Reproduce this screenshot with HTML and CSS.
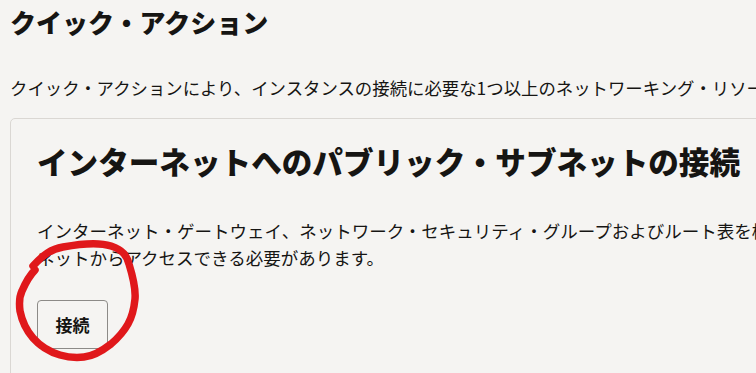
FILE: index.html
```html
<!DOCTYPE html>
<html lang="ja">
<head>
<meta charset="utf-8">
<link rel="stylesheet" href="styles.css">
</head>
<body>
<main class="page">
  <h1 class="title">クイック・アクション</h1>
  <p class="intro">クイック・アクションにより、インスタンスの接続に必要な1つ以上のネットワーキング・リソースを作成できます。</p>
  <section class="card">
    <h2 class="card-title">インターネットへのパブリック・サブネットの接続</h2>
    <p class="card-text">インターネット・ゲートウェイ、ネットワーク・セキュリティ・グループおよびルート表を構成します。インスタンスはインター<br>ネットからアクセスできる必要があります。</p>
    <div class="actions">
      <button class="btn">接続</button>
      <svg class="annotation" width="140" height="130" viewBox="0 0 140 130" aria-hidden="true">
        <path d="M22 31 C32 20 40 14 52 12 C68 9 88 7 100 11 C112 15 116 21 118 29 C122 42 125 53 124 64 C123 74 121 82 117 89 C112 98 107 103 100 109 C91 116 83 121 73 122 C64 123 56 122 49 120 C39 117 29 111 22 103 C15 95 11 86 9 76 C8 68 8 62 11 56 C14 49 17 42 24 35" fill="none" stroke="#e0181b" stroke-width="7.5" stroke-linecap="round" stroke-linejoin="round"/>
      </svg>
    </div>
  </section>
</main>
</body>
</html>
```

FILE: styles.css
```css
* { box-sizing: border-box; }
html, body {
  margin: 0;
  padding: 0;
  background: #f5f4f2;
  overflow: hidden;
}
body {
  width: 756px;
  height: 373px;
  font-family: "Noto Sans CJK JP", "Noto Sans", sans-serif;
  color: #161513;
}
.page {
  padding: 4px 0 0 10px;
  width: 1100px;
}
.title {
  margin: 0;
  font-size: 26px;
  line-height: 36px;
  font-weight: 900;
}
.intro {
  margin: 35px 0 0 0;
  font-size: 17.4px;
  line-height: 26px;
  white-space: nowrap;
}
.card {
  margin-top: 17px;
  border: 1px solid #dad7d3;
  border-radius: 5px;
  padding: 22px 26px 30px 26px;
  width: 1000px;
}
.card-title {
  margin: 0;
  font-size: 30.6px;
  line-height: 40px;
  font-weight: 900;
}
.card-text {
  margin: 36px 0 0 0;
  font-size: 17.5px;
  line-height: 27px;
  white-space: nowrap;
}
.actions {
  position: relative;
  margin-top: 29px;
}
.btn {
  display: block;
  width: 71px;
  height: 49px;
  border: 1px solid #8c8a87;
  border-radius: 4px;
  background: transparent;
  font-family: "Noto Sans CJK JP", sans-serif;
  font-size: 17px;
  font-weight: 700;
  color: #161513;
  padding: 0;
}
.annotation {
  position: absolute;
  left: -26px;
  top: -65px;
}
```
